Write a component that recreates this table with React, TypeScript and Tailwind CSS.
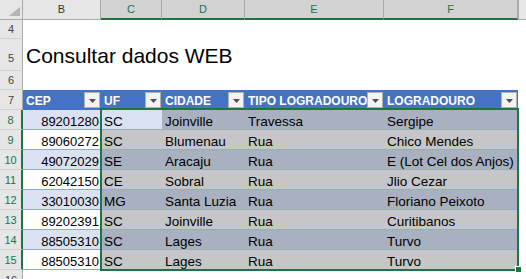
import React from "react";

const COLW = ["w-[78px]", "w-[61px]", "w-[83px]", "w-[139px]", "w-[134px]"];
const LETTERS = ["B", "C", "D", "E", "F"];
const HEAD = ["CEP", "UF", "CIDADE", "TIPO LOGRADOURO", "LOGRADOURO"];

const DATA: string[][] = [
  ["89201280", "SC", "Joinville", "Travessa", "Sergipe"],
  ["89060272", "SC", "Blumenau", "Rua", "Chico Mendes"],
  ["49072029", "SE", "Aracaju", "Rua", "E (Lot Cel dos Anjos)"],
  ["62042150", "CE", "Sobral", "Rua", "Jlio Cezar"],
  ["33010030", "MG", "Santa Luzia", "Rua", "Floriano Peixoto"],
  ["89202391", "SC", "Joinville", "Rua", "Curitibanos"],
  ["88505310", "SC", "Lages", "Rua", "Turvo"],
  ["88505310", "SC", "Lages", "Rua", "Turvo"],
];

function RowHead({ n, sel, h, pb }: { n: number; sel?: boolean; h: string; pb?: string }) {
  return (
    <div
      className={`${h} w-[23px] shrink-0 flex items-end justify-center bg-[#e6e6e6] border-b border-b-[#d0d0d0] text-[11px] leading-none ${
        sel ? "border-r-2 border-r-[#217346] text-[#217346]" : "border-r border-r-[#ababab] text-[#444]"
      } ${pb ?? "pb-[3px]"}`}
    >
      {n}
    </div>
  );
}

function Drop() {
  return (
    <div className="absolute right-[1px] top-[2px] w-[16px] h-[16px] bg-[#f3f3f3] border border-[#b0b0b0] flex items-center justify-center">
      <svg width="7" height="4" viewBox="0 0 7 4" className="mt-[1px]">
        <polygon points="0,0 7,0 3.5,4" fill="#505050" />
      </svg>
    </div>
  );
}

export default function App() {
  return (
    <div className="w-[526px] h-[279px] overflow-hidden bg-white relative font-['Liberation_Sans',Arial,sans-serif] text-black">
      {/* column headers */}
      <div className="flex h-[20px]">
        <div className="w-[23px] shrink-0 bg-[#e6e6e6] border-r border-b border-[#ababab] relative">
          <svg width="13" height="10" viewBox="0 0 13 10" className="absolute left-[8px] top-[7px]">
            <polygon points="12,0 12,9 1,9" fill="#b4b4b4" />
          </svg>
        </div>
        {LETTERS.map((l, i) => (
          <div
            key={l}
            className={`${COLW[i]} shrink-0 flex items-center justify-center text-[11px] border-r border-r-[#ababab] ${
              i === 0
                ? "bg-[#e6e6e6] border-b border-b-[#ababab] text-[#333]"
                : "bg-[#d2d2d2] border-b-2 border-b-[#217346] text-[#217346]"
            }`}
          >
            {l}
          </div>
        ))}
        <div className="flex-1 bg-[#e6e6e6] border-l border-l-[#ababab] border-b border-b-[#ababab]" />
      </div>

      {/* row 4 */}
      <div className="flex">
        <RowHead n={4} h="h-[19px]" />
        <div className="flex-1" />
      </div>
      {/* row 5 */}
      <div className="flex">
        <RowHead n={5} h="h-[32px]" pb="pb-[6px]" />
        <div className="flex-1 flex items-end pl-[3px] pb-[5px] text-[21px] leading-none">Consultar dados WEB</div>
      </div>
      {/* row 6 */}
      <div className="flex">
        <RowHead n={6} h="h-[19px]" />
        <div className="flex-1" />
      </div>
      {/* row 7 header */}
      <div className="flex">
        <RowHead n={7} h="h-[20px]" />
        {HEAD.map((t, i) => (
          <div
            key={t}
            className={`${COLW[i]} shrink-0 h-[20px] relative bg-[#4472c4] text-white font-bold text-[12px] pl-[3px] pt-[3px] leading-[17px] overflow-hidden whitespace-nowrap`}
          >
            {t}
            <Drop />
          </div>
        ))}
        <div className="flex-1" />
      </div>
      {/* data rows */}
      {DATA.map((r, ri) => {
        const band = ri % 2 === 0;
        return (
          <div key={ri} className="flex">
            <RowHead n={8 + ri} sel h="h-[20px]" />
            {r.map((v, ci) => {
              let bg: string;
              if (ci === 0) bg = band ? "bg-[#d9e1f2]" : "bg-white";
              else if (ci === 1 && ri === 0) bg = "bg-[#d9e1f2]";
              else bg = band ? "bg-[#a9b0bf]" : "bg-[#c6c6c6]";
              return (
                <div
                  key={ci}
                  className={`${COLW[ci]} shrink-0 h-[20px] ${bg} border-b border-b-[#8ea9db] pt-[3px] leading-[17px] whitespace-nowrap overflow-hidden ${
                    ci === 0 ? "text-right pr-[2px] text-[13px]" : "pl-[3px] text-[13.5px]"
                  }`}
                >
                  {v}
                </div>
              );
            })}
            <div className="flex-1" />
          </div>
        );
      })}
      {/* row 16 */}
      <div className="flex">
        <RowHead n={16} h="h-[20px]" />
        <div className="flex-1" />
      </div>

      {/* selection overlay */}
      <div className="absolute left-[100px] top-[108px] w-[419px] h-[163px] border-2 border-[#217346] pointer-events-none" />
      <div className="absolute left-[515px] top-[266px] w-[7px] h-[7px] bg-[#217346] border border-white pointer-events-none" />
    </div>
  );
}
